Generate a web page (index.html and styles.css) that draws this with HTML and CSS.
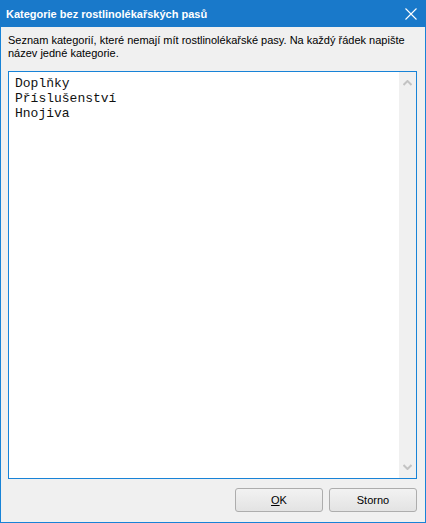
FILE: index.html
```html
<!DOCTYPE html>
<html lang="cs">
<head>
<meta charset="utf-8">
<title>Kategorie bez rostlinolékařských pasů</title>
<link rel="stylesheet" href="styles.css">
</head>
<body>
<div class="window">
  <div class="titlebar">
    <span class="title">Kategorie bez rostlinolékařských pasů</span>
    <svg class="close" width="12" height="12" viewBox="0 0 12 12"><path d="M0.5 0.5 L11.5 11.5 M11.5 0.5 L0.5 11.5" stroke="#fff" stroke-width="1.1" fill="none"/></svg>
  </div>
  <div class="content">
    <p class="desc">Seznam kategorií, které nemají mít rostlinolékařské pasy. Na každý řádek napište název jedné kategorie.</p>
    <div class="editor">
      <div class="editor-text">Doplňky
Příslušenství
Hnojiva</div>
      <div class="scrollbar">
        <svg width="9" height="6" viewBox="0 0 9 6"><path d="M0.5 5 L4.5 1 L8.5 5" stroke="#c3c3c3" stroke-width="2" fill="none"/></svg>
        <svg width="9" height="6" viewBox="0 0 9 6"><path d="M0.5 1 L4.5 5 L8.5 1" stroke="#c3c3c3" stroke-width="2" fill="none"/></svg>
      </div>
    </div>
    <div class="buttons">
      <button class="btn"><u>O</u>K</button>
      <button class="btn">Storno</button>
    </div>
  </div>
</div>
</body>
</html>
```
FILE: styles.css
```css
html, body {
  margin: 0;
  padding: 0;
  background: #f0f0f0;
}
.window {
  width: 426px;
  height: 523px;
  box-sizing: border-box;
  border: 1px solid #1883d7;
  border-top: none;
  display: flex;
  flex-direction: column;
  background: #f0f0f0;
  font-family: "Liberation Sans", Arial, sans-serif;
}
.titlebar {
  height: 27px;
  flex: none;
  background: #1979ca;
  color: #fff;
  display: flex;
  align-items: center;
  justify-content: space-between;
  padding: 0 9px 0 6px;
  margin: 0 -1px;
}
.title {
  font-weight: bold;
  font-size: 11px;
}
.close {
  display: block;
}
.content {
  flex: 1;
  display: flex;
  flex-direction: column;
  padding: 7px 8px 10px 7px;
  min-height: 0;
}
.desc {
  margin: 0;
  font-size: 11px;
  line-height: 13px;
  color: #000;
}
.editor {
  flex: 1;
  margin-top: 11px;
  border: 1px solid #1883d7;
  background: #fff;
  display: flex;
  min-height: 0;
}
.editor-text {
  flex: 1;
  white-space: pre;
  font-family: "Liberation Mono", "Courier New", monospace;
  font-size: 13px;
  line-height: 15px;
  padding: 4px 6px;
  color: #111;
}
.scrollbar {
  width: 17px;
  background: #f0f0f0;
  display: flex;
  flex-direction: column;
  justify-content: space-between;
  align-items: center;
  padding: 8px 0;
}
.scrollbar svg {
  display: block;
}
.buttons {
  display: flex;
  justify-content: flex-end;
  gap: 6px;
  margin-top: 9px;
}
.btn {
  width: 88px;
  height: 24px;
  border: 1px solid #adadad;
  border-radius: 3px;
  background: linear-gradient(#f2f2f2, #e3e3e3);
  font-family: "Liberation Sans", Arial, sans-serif;
  font-size: 11px;
  color: #000;
  padding: 0;
}
```
